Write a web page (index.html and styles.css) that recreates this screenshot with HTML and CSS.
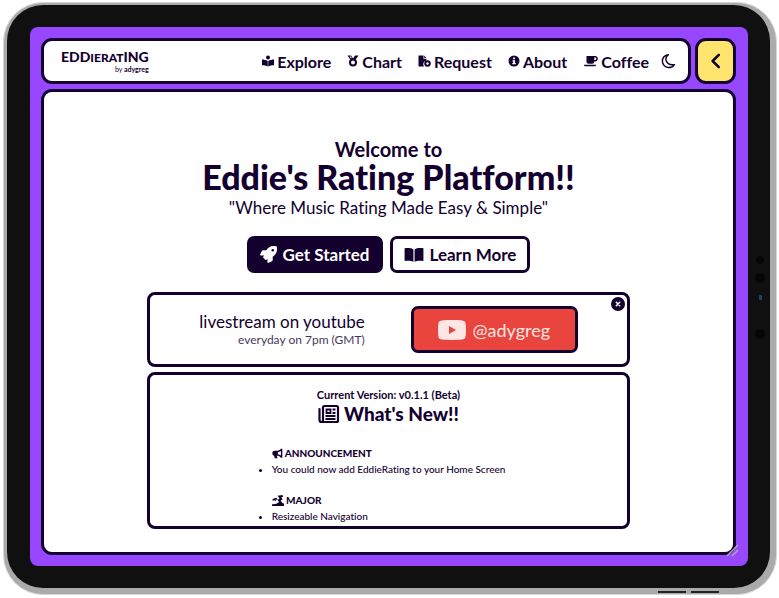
FILE: index.html
```html
<!DOCTYPE html>
<html lang="en">
<head>
<meta charset="utf-8">
<meta name="viewport" content="width=device-width, initial-scale=1">
<title>EddieRating</title>
<link rel="stylesheet" href="styles.css">
</head>
<body>
<div class="device">
  <div class="bezel">
    <div class="screen">
      <header class="topbar">
        <nav class="nav">
          <a class="logo" href="#"><span class="logo-name">EDD<span class="logo-mid">IERAT</span>ING</span><span class="logo-by">by <b>adygreg</b></span></a>
          <div class="links">
            <a href="#"><svg class="ico" viewBox="0 0 24 24"><circle cx="12" cy="5" r="4"/><path d="M0 9c4 0 8 1 11.500 3v11C8 21 5 20.500 0 20.500zM24 9c-4 0-8 1-11.500 3v11c3.500-2 6.500-2.500 11.500-2.500z"/></svg>Explore</a>
            <a href="#"><svg class="ico" viewBox="0 0 24 24"><path d="M1 1h7l4 6 4-6h7l-5.500 8h-11zM5 3l3 4 1.500-1L7.500 3z" fill-rule="evenodd"/><circle cx="12" cy="15" r="6" fill="none" stroke="currentColor" stroke-width="4"/></svg>Chart</a>
            <a href="#"><svg class="ico file" viewBox="0 0 26 24"><path d="M1 1h10v7h6v3a7.500 7.500 0 0 0-5 12H1zM12.500 1l4.500 5.500h-4.500z"/><path d="M19 10.500a6.500 6.500 0 1 0 0 13 6.500 6.500 0 0 0 0-13zm0 4a2.500 2.500 0 1 1 0 5 2.500 2.500 0 0 1 0-5z" fill-rule="evenodd"/></svg>Request</a>
            <a href="#"><svg class="ico" viewBox="0 0 24 24"><path fill-rule="evenodd" d="M12 1a11 11 0 1 0 0 22 11 11 0 0 0 0-22zm-1.800 4h3.600v3.500h-3.600zM9 10.500h5v5.500h1.500v2.500h-7V16h1.800v-3H9z"/></svg>About</a>
            <a href="#"><svg class="ico wide" viewBox="0 0 28 24"><path fill-rule="evenodd" d="M6 2h17a5 5 0 0 1 0 11h-1.500c0 3-1.500 4.500-4.500 4.500h-6c-3.500 0-5-1.500-5-4.500zm15.500 3v5H23a2.500 2.500 0 0 0 0-5zM1 19.500h24c0 2-1.500 3-3 3H4c-2 0-3-1-3-3z"/></svg>Coffee</a>
            <button class="theme" type="button" aria-label="Dark mode"><svg viewBox="0 0 16 16"><path fill="none" stroke="currentColor" stroke-width="1.500" stroke-linejoin="round" d="M8 1.200C4 1.800 1.500 4.800 1.500 8.300c0 4 3.200 6.700 6.800 6.700 2.500 0 4.800-1.200 6-3.200C9 13 5.200 10 5.200 6.200 5.200 4 6.300 2.200 8 1.200z"/></svg></button>
          </div>
        </nav>
        <button class="collapse" type="button" aria-label="Collapse"><svg viewBox="0 0 16 16"><path d="M10.500 2.500 5 8l5.500 5.500" fill="none" stroke="currentColor" stroke-width="2.300" stroke-linecap="round" stroke-linejoin="round"/></svg></button>
      </header>
      <main class="page">
        <h1 class="hero"><span class="welcome">Welcome to</span><span class="title">Eddie's Rating Platform!!</span></h1>
        <p class="tagline">"Where Music Rating Made Easy &amp; Simple"</p>
        <div class="actions">
          <a class="btn dark" href="#"><svg viewBox="0 0 512 512"><path fill-rule="evenodd" d="M505 19c-1-6-6-11-12-12C460 0 434 0 409 0c-106 0-170 57-218 128H95c-16 0-34 11-41 26L5 251c-9 18 3 37 21 37h104l-29 29c-10 10-10 26 0 36l58 58c10 10 26 10 36 0l29-29v104c0 18 20 29 36 22l97-49c15-7 26-26 26-41v-96c71-48 129-112 129-218 0-25 0-51-7-85zM384 168a40 40 0 1 1 0-80 40 40 0 0 1 0 80z"/></svg>Get Started</a>
          <a class="btn" href="#"><svg class="book" viewBox="0 0 24 18"><path d="M11.300 2.500C9 .8 5 .4.700 1v15.300c4-.6 8-.4 10.600 1zM12.700 2.500C15 .8 19 .4 23.300 1v15.300c-4-.6-8-.4-10.600 1z"/></svg>Learn More</a>
        </div>
        <section class="card stream">
          <div class="when"><p class="what">livestream on youtube</p><p class="time">everyday on 7pm (GMT)</p></div>
          <a class="youtube" href="#"><svg viewBox="0 0 28 20"><path fill-rule="evenodd" d="M14 0c4 0 8 .1 10.500.5 2 .3 3 1.500 3.200 3.500.4 4 .4 8 0 12-.2 2-1.200 3.200-3.200 3.500-6 .7-15 .7-21 0-2-.3-3-1.500-3.200-3.500-.4-4-.4-8 0-12C.5 2 1.500.8 3.500.5 6 .1 10 0 14 0zm-3 6v8l7-4z"/></svg>@adygreg</a>
          <button class="close" type="button" aria-label="Close"><svg viewBox="0 0 14 14"><circle cx="7" cy="7" r="7"/><path d="m5.300 5.300 3.400 3.400m0-3.400L5.300 8.700" stroke="#fff" stroke-width="1.500" stroke-linecap="round"/></svg></button>
        </section>
        <section class="card news">
          <p class="version">Current Version: v0.1.1 (Beta)</p>
          <h2><svg viewBox="0 0 22 20"><path fill="none" stroke="currentColor" stroke-width="2.200" stroke-linejoin="round" stroke-linecap="round" d="M5 15.500V3.500Q5 2 6.500 2h12Q20 2 20 3.500v13q0 1.500-1.500 1.500H3.500Q1.500 18 1.500 16V5M5 15.500Q5 18 3.500 18"/><path fill="none" stroke="currentColor" stroke-width="1.800" d="M8.500 5.500h4v3.500h-4zM14.500 5.500h3M14.500 9h3M7.500 12h10M7.500 15h10"/></svg>What's New!!</h2>
          <div class="log">
            <h3><svg viewBox="0 0 16 16"><path fill-rule="evenodd" d="M13 1h2v13h-2c-2-2-4-3-6-3l1 4H4l-1-4C1 11 .500 9 .500 7.500S1.500 4 4 4h3c2 0 4-1 6-3zm0 3.500C11.500 5.600 10 6 8.500 6.200v2.900c1.500.2 3 .7 4.500 1.700z"/></svg>ANNOUNCEMENT</h3>
            <ul><li>You could now add EddieRating to your Home Screen</li></ul>
            <h3><svg viewBox="0 0 18 16"><path d="M8 1l7-1 1.500 2-3 1.500 2 3-3 1.500 2 3c1 1 2 1.500 3.500 1.500V16H0v-2.500c3 0 6-.5 8-2l2.500-1.500L8 7.500 11 5 9.500 3zM0 8c1-3 4-4.500 7-3.500L8.500 7 5 6.500 6 9 3 7.500z"/></svg>MAJOR</h3>
            <ul><li>Resizeable Navigation</li></ul>
          </div>
        </section>
      </main>
      <svg class="grip" viewBox="0 0 14 14"><path d="M1 12 12 1M6 12l6-6" stroke="#aaa" stroke-width="1.500"/></svg>
    </div>
    <div class="sensors"><i></i><i class="big"></i><i class="blue"></i><i class="big far"></i></div>
  </div>
  <div class="keys"><i></i><i></i></div>
</div>
</body>
</html>
```

FILE: styles.css
```css
:root { --ink: #14002f; --violet: #9747ff; }
* { box-sizing: border-box; }
body { margin: 0; min-height: 100vh; display: flex; padding: 2px 2px 3px 3px; background: #fff; color: var(--ink); font-family: Lato, "Liberation Sans", sans-serif; font-variant-ligatures: none; }
h1, h2, h3, p, ul { margin: 0; padding: 0; }
a { color: inherit; text-decoration: none; }
button { font: inherit; color: inherit; padding: 0; cursor: pointer; }
svg { fill: currentColor; flex: none; }
.device { position: relative; flex: 1; display: flex; padding: 2px 6px 6px 3px; border: 1px solid #d5d5d5; border-radius: 40px; background: #aaa; }
.bezel { position: relative; flex: 1; display: flex; min-width: 0; padding: 22px 22px 22px 23px; border-radius: 36px; background: #101010; }
.screen { position: relative; flex: 1; min-width: 0; display: flex; flex-direction: column; gap: 5px; padding: 11px 12px 11px 11px; border-radius: 8px; background: var(--violet); }
.topbar { display: flex; gap: 4px; height: 46px; }
.nav { flex: 1; display: flex; justify-content: space-between; align-items: center; padding: 0 12px 0 17px; background: #fff; border: 3px solid var(--ink); border-radius: 11px; }
.logo { display: flex; flex-direction: column; }
.logo-name { font-size: 14px; line-height: 14px; font-weight: 900; }
.logo-mid { font-size: 12px; }
.logo-by { align-self: flex-end; font-size: 7px; line-height: 8px; }
.links { display: flex; align-items: center; gap: 16px; font-size: 16px; font-weight: 700; }
.links a { display: flex; align-items: center; gap: 3px; }
.ico { width: 12px; height: 12px; }
.ico.file { width: 13px; }
.ico.wide { width: 15px; }
.theme { width: 15px; height: 16px; margin-left: -4px; border: 0; background: none; }
.theme svg { display: block; width: 15px; height: 16px; }
.collapse { width: 41px; display: grid; place-items: center; background: #ffe56e; border: 3px solid var(--ink); border-radius: 11px; }
.collapse svg { width: 18px; height: 18px; }
.page { flex: 1; display: flex; flex-direction: column; align-items: center; padding: 46px 0 23px; background: #fff; border: 3px solid var(--ink); border-radius: 11px; }
.hero { display: flex; flex-direction: column; align-items: center; }
.welcome { font-size: 20px; line-height: 22px; font-weight: 700; }
.title { font-size: 34px; line-height: 34px; font-weight: 900; }
.tagline { font-size: 17px; line-height: 28px; }
.actions { display: flex; gap: 7px; margin: 14px 0 19px; }
.btn { display: flex; align-items: center; gap: 6px; height: 37px; padding: 0 11px; border: 3px solid var(--ink); border-radius: 7px; font-size: 17px; font-weight: 700; }
.btn svg { width: 17px; height: 17px; }
.btn .book { width: 20px; height: 16px; }
.btn.dark { padding: 0 10px; background: var(--ink); color: #fff; }
.card { width: 70%; border: 3px solid var(--ink); border-radius: 8px; }
.stream { position: relative; display: flex; align-items: center; gap: 46px; height: 75px; margin-bottom: 5px; padding-left: 49px; }
.when { text-align: right; }
.what { font-size: 17px; line-height: 20px; }
.time { font-size: 12px; line-height: 15px; opacity: .8; }
.youtube { display: flex; align-items: center; justify-content: center; gap: 6px; width: 167px; height: 47px; border: 3px solid var(--ink); border-radius: 7px; background: #e9443d; color: #ffe5e3; font-size: 18px; }
.youtube svg { width: 28px; height: 20px; }
.close { position: absolute; top: 2px; right: 2px; width: 14px; height: 14px; border: 0; background: none; }
.close svg { display: block; }
.news { flex: 1; display: flex; flex-direction: column; align-items: center; overflow: hidden; padding-top: 12px; }
.version { font-size: 11px; line-height: 15px; font-weight: 700; }
h2 { display: flex; align-items: center; gap: 4px; font-size: 19px; line-height: 24px; font-weight: 900; }
h2 svg { width: 22px; height: 20px; }
.log { margin-top: 19px; font-size: 10px; line-height: 16px; font-weight: 500; }
h3 { display: flex; align-items: center; gap: 2px; font-size: 10px; line-height: 16px; font-weight: 900; }
h3 svg { height: 11px; }
ul { margin-bottom: 15px; }
ul:last-child { margin-bottom: 0; }
.grip { position: absolute; right: 8px; bottom: 8px; width: 14px; height: 14px; }
.sensors { position: absolute; right: 4px; top: 251px; width: 12px; display: flex; flex-direction: column; align-items: center; gap: 9px; }
.sensors i { width: 8px; height: 8px; border-radius: 50%; background: #060606; }
.sensors .big { width: 10px; height: 10px; }
.sensors .blue { width: 3px; height: 5px; margin-top: 3px; border-radius: 1px; background: #20436a; }
.sensors .far { margin-top: 20px; }
.keys { position: absolute; right: 57px; bottom: 1px; display: flex; gap: 5px; }
.keys i { width: 28px; height: 2px; background: #222; }
```
